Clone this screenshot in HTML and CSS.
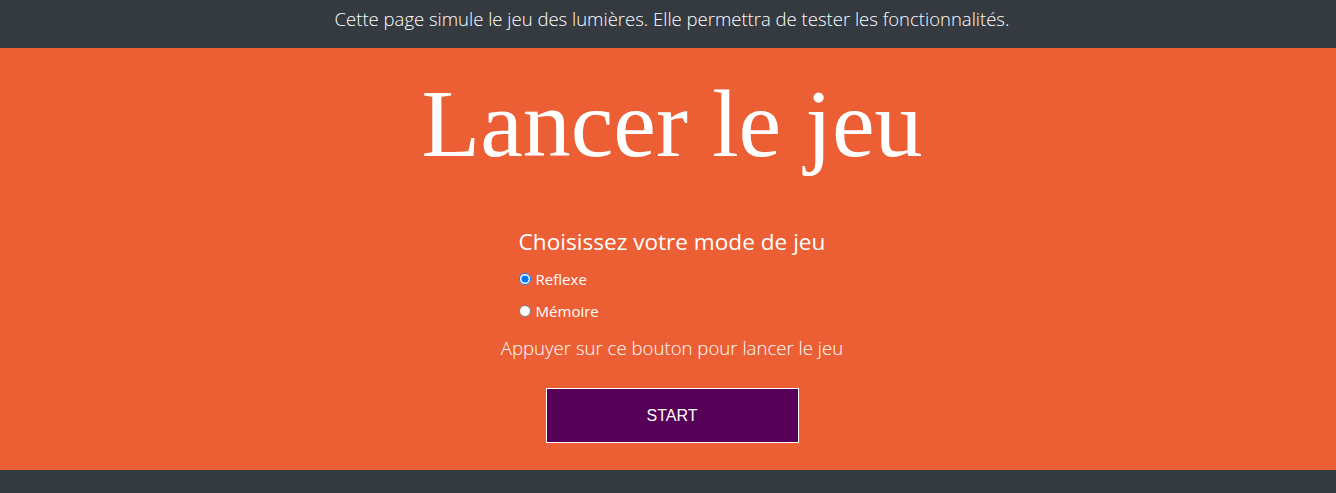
FILE: index.html
```html
<!DOCTYPE html>
<html lang="fr">
<head>
<meta charset="utf-8">
<title>Jeu des lumières</title>
<link rel="stylesheet" href="styles.css">
</head>
<body>
<header class="topbar">
  <p class="topbar-text">Cette page simule le jeu des lumières. Elle permettra de tester les fonctionnalités.</p>
</header>
<main class="main">
  <h1 class="title">Lancer le jeu</h1>
  <div class="mode-wrap">
    <form class="mode">
      <h4 class="mode-title">Choisissez votre mode de jeu</h4>
      <label class="option"><input type="radio" name="mode" checked> Reflexe</label>
      <label class="option"><input type="radio" name="mode"> Mémoire</label>
    </form>
  </div>
  <p class="hint">Appuyer sur ce bouton pour lancer le jeu</p>
  <button class="start" type="button">START</button>
</main>
<footer class="footer"></footer>
</body>
</html>
```
FILE: styles.css
```css
html, body {
  margin: 0;
  padding: 0;
}
body {
  font-family: "Open Sans", "Noto Sans", sans-serif;
  background: #343a40;
  color: #fff;
}
.topbar {
  height: 48px;
  background: #343a40;
  display: flex;
  justify-content: center;
  align-items: flex-start;
  padding-left: 8px;
  box-sizing: border-box;
}
.topbar-text {
  margin: 5px 0 0;
  font-size: 18.5px;
  font-weight: 300;
  line-height: 27px;
}
.main {
  background: #ec5e34;
  height: 422px;
  display: flex;
  flex-direction: column;
  align-items: center;
  padding-left: 8px;
  box-sizing: border-box;
}
.title {
  font-family: "Liberation Serif", "Times New Roman", serif;
  font-weight: 400;
  font-size: 96px;
  line-height: 1.2;
  margin: 18px 0 0;
}
.mode-wrap {
  margin-top: 46px;
  display: flex;
  justify-content: center;
}
.mode {
  display: flex;
  flex-direction: column;
  align-items: flex-start;
}
.mode-title {
  margin: 0 0 6px;
  font-size: 22.6px;
  font-weight: 400;
  line-height: 30px;
}
.option {
  display: flex;
  align-items: center;
  gap: 5px;
  font-size: 15px;
  line-height: 32px;
}
.option input {
  margin: 0;
  width: 12px;
  height: 12px;
}
.hint {
  margin: 7px 0 0;
  font-size: 18.6px;
  font-weight: 300;
  line-height: 27px;
}
.start {
  margin-top: 27px;
  width: 253px;
  height: 55px;
  background: #570058;
  border: 1px solid #fff;
  color: #fff;
  font-family: "Liberation Sans", Arial, sans-serif;
  font-size: 16px;
}
.footer {
  height: 23px;
  background: #343a40;
}
```
